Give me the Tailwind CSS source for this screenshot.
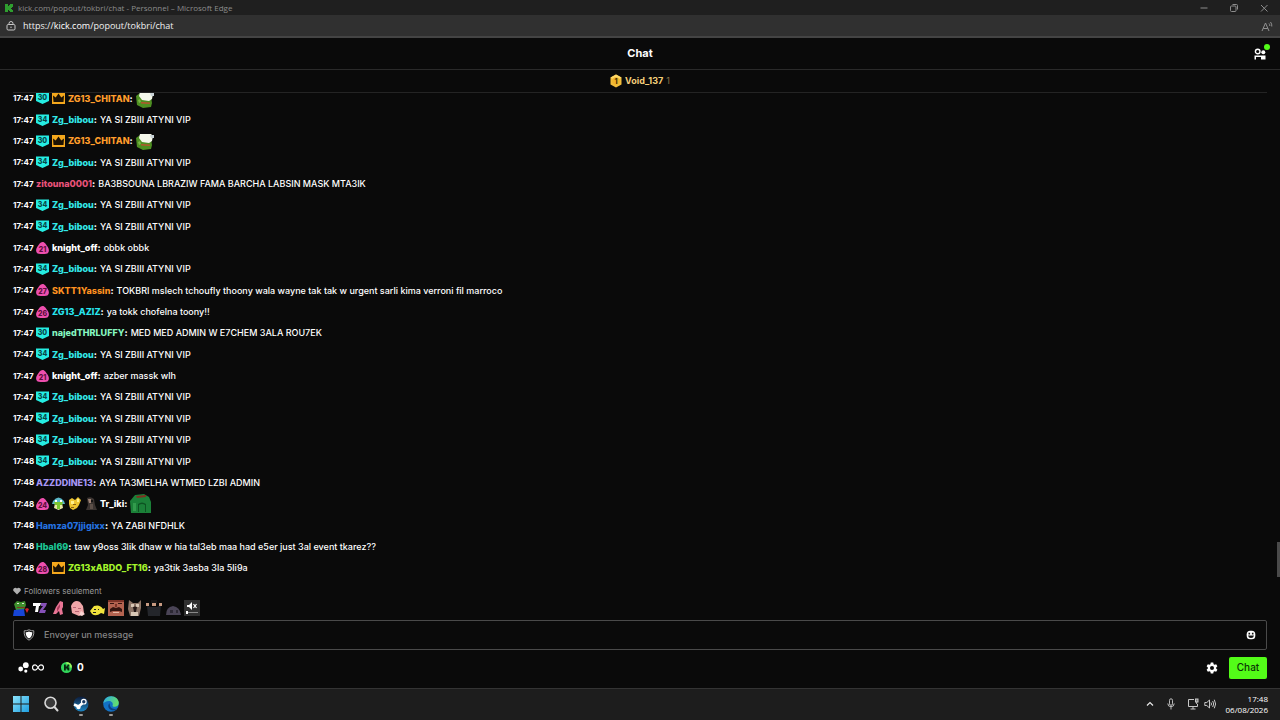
<!DOCTYPE html>
<html lang="fr">
<head>
  <meta charset="UTF-8">
  <meta name="viewport" content="width=device-width, initial-scale=1.0">
  <title>kick.com/popout/tokbri/chat</title>
  <script src="https://cdn.jsdelivr.net/npm/@tailwindcss/browser@4"></script>
</head>
<body class="h-screen flex flex-col overflow-hidden bg-[#0a0a0a] text-white font-['Inter',sans-serif]">

  <!-- window title bar -->
  <div class="h-[15px] shrink-0 flex items-center bg-[#1f1f1f] pl-1 pr-[11px] text-[8px] text-[#8c8c8c] font-['Open_Sans',sans-serif]">
    <svg class="size-[10px] mr-1" viewBox="0 0 10 10"><path fill="#2f9e2f" d="M1 1h3v2h1V2h1V1h3v3H8v1H7v1h1v1h1v2H6V8H5V7H4v2H1z"/></svg>
    <span>kick.com/popout/tokbri/chat - Personnel – Microsoft Edge</span>
    <div class="ml-auto flex items-center gap-5 text-[#8c8c8c]">
      <button aria-label="Réduire"><svg class="size-[10px]" viewBox="0 0 10 10" stroke="currentColor" fill="none"><path d="M1.500 5h7"/></svg></button>
      <button aria-label="Restaurer"><svg class="size-[10px]" viewBox="0 0 10 10" stroke="currentColor" fill="none"><rect x="1.500" y="3" width="5.500" height="5.500" rx="1"/><path d="M3.500 1.500h4a1 1 0 0 1 1 1v4"/></svg></button>
      <button aria-label="Fermer"><svg class="size-[10px]" viewBox="0 0 10 10" stroke="currentColor" fill="none"><path d="M2 2l6.500 6.500M8.500 2L2 8.500"/></svg></button>
    </div>
  </div>

  <!-- address bar -->
  <div class="h-[23px] shrink-0 flex items-center bg-[#303030] border-b-2 border-[#444444] pt-px pl-[6px] pr-[7px] text-[9px] text-[#f0f0f0] font-['Open_Sans',sans-serif]">
    <svg class="size-[10px] mr-[7px]" viewBox="0 0 10 10" fill="none" stroke="#c8c8c8"><rect x="1" y="3.500" width="8" height="5.500" rx="1.200"/><path d="M3 3.500V2.500a2 2 0 0 1 4 0v1"/><circle cx="5" cy="6.200" r=".7" fill="#c8c8c8" stroke="none"/></svg>
    <span>https://<span class="text-white">kick.com</span>/popout/tokbri/chat</span>
    <svg class="ml-auto w-3 h-[11px]" viewBox="0 0 12 11" fill="none" stroke="#909090"><path d="M1 10L4.500 2 8 10M2.300 7.500h4.500M8 2.500q1 1 .8 2.500M9.500 1q1.600 2 1.300 4.500"/></svg>
  </div>

  <header class="h-8 shrink-0 flex items-center border-b border-[#2a2a2a] px-3">
    <h1 class="flex-1 text-center pl-5 text-[11px] font-bold">Chat</h1>
    <button class="relative w-5 h-4" aria-label="Spectateurs">
      <svg class="w-3 h-3 ml-[6px]" viewBox="0 0 12 12"><circle cx="3.700" cy="3.500" r="2.300" fill="none" stroke="#fff" stroke-width="1.400"/><circle cx="9.300" cy="4.200" r="2" fill="#fff"/><path fill="#fff" d="M.5 7.500h11v4h-4.500V9H2v2.500H.5z"/></svg>
      <span class="absolute -top-[2px] -right-[2px] size-[6px] rounded-full bg-[#53fc18]"></span>
    </button>
  </header>

  <div class="h-[23px] shrink-0 mx-[13px] flex items-center justify-center border-b border-[#242424] text-[9px] font-bold text-[#f5cf7b]">
    <svg class="w-3 h-[14px] mr-[3px]" viewBox="0 0 12 14"><path fill="#f3bd3a" d="M6 .5l5.500 3v7L6 13.500.5 10.500v-7z"/><path fill="#ffd966" d="M6 .5l5.500 3L6 7 .5 3.500z"/><circle cx="6" cy="7" r="3.800" fill="#f0b52d"/><text x="6" y="9.500" text-anchor="middle" font-size="7" font-weight="800" fill="#4b3200">1</text></svg>
    <span>Void_137</span>
    <span class="ml-[3px] font-normal text-[#8a744a]">1</span>
  </div>

  <!-- messages, scrolled to the bottom -->
  <main class="flex-1 min-h-0 relative flex flex-col justify-end overflow-hidden">
    <ul id="messages" class="h-[calc(100%+6px)] shrink-0 flex flex-col px-[13px] text-[9px] leading-none"></ul>
    <!-- scrollbar thumb -->
    <div class="absolute right-0 bottom-px w-[3px] h-[35px] bg-[#4a4a4a]"></div>
  </main>

  <footer class="shrink-0 px-[13px] pt-[7px] pb-[9px]">
    <p class="h-[11px] flex items-center gap-[3px] text-[8px] text-[#9a9a9a]">
      <svg class="size-2" viewBox="0 0 8 8"><path fill="#b0b0b0" d="M4 7.500L.8 4.300A2 2 0 0 1 4 1.600a2 2 0 0 1 3.200 2.700z"/></svg>
      Followers seulement
    </p>
    <div id="quick-emotes" class="mt-1 h-4 flex gap-[3px]"></div>

    <div class="mt-1 h-[30px] flex items-center rounded-[2px] border border-[#4a4a4a] px-[9px]">
      <svg class="size-3" viewBox="0 0 12 12"><path fill="none" stroke="#a0a0a0" d="M6 .8q2.500 1.200 4.800 1 .6 6.500-4.800 9.400Q.6 8.300 1.200 1.800 3.500 2 6 .8z"/><path fill="#fff" d="M6 2.500q1.600.8 3.300.7Q9.500 7.500 6 9.500 2.500 7.500 2.700 3.200 4.400 3.300 6 2.500z"/></svg>
      <input type="text" aria-label="Envoyer un message" placeholder="Envoyer un message" class="flex-1 ml-[9px] bg-transparent text-[9px] font-medium outline-none placeholder:text-[#858585]">
      <button aria-label="Emotes"><svg class="size-[10px] mr-[1px] block" viewBox="0 0 10 10"><rect x=".7" y=".7" width="8.600" height="8.600" rx="3.500" fill="#fff"/><path fill="#111" d="M2.500 2.800h1.600v1.600H2.500zM5.900 2.800h1.600v1.600H5.900zM2 5.500h6q-.5 2.500-3 2.500T2 5.500z"/></svg></button>
    </div>

    <div class="mt-[6px] h-[23px] flex items-center text-[10px] font-bold">
      <button class="flex items-center gap-[3px] ml-[5px]" aria-label="Identité">
        <svg class="size-[11px]" viewBox="0 0 11 11" fill="#fff"><circle cx="7.800" cy="3.200" r="2.900"/><circle cx="2.700" cy="7" r="2.400"/><circle cx="7.800" cy="9.100" r="1.600"/></svg>
        <svg class="w-3 h-[7px]" viewBox="0 0 12 7" fill="none" stroke="#fff" stroke-width="1.200"><path d="M6 3.500C5 1.800 4.300.8 3.100.8a2.600 2.700 0 0 0 0 5.400C4.300 6.200 5 5.200 6 3.500S7.700.8 8.900.8a2.600 2.700 0 0 1 0 5.400C7.700 6.200 7 5.200 6 3.500z"/></svg>
      </button>
      <button class="flex items-center gap-[5px] ml-[17px]">
        <svg class="size-[11px]" viewBox="0 0 11 11"><circle cx="5.500" cy="5.500" r="5.500" fill="#31d65a"/><path d="M5.500 0a5.500 5.500 0 0 1 5.500 5.500H9A3.500 3.500 0 0 0 5.500 2z" fill="#9cf25c"/><path fill="#06240d" d="M3 2.500h1.800v2h.9v-1h.9v-1h1.700v2h-.9v1h.9v3H6.600v-1h-.9v-1h-.9v2H3z"/></svg>
        0
      </button>
      <button class="ml-auto mr-[11px]" aria-label="Paramètres"><svg class="size-3 block" viewBox="0 0 24 24" fill="#fff"><path fill-rule="evenodd" d="M9.500 1h5l.7 3.300 1.900 1.100 3.200-1 2.500 4.200-2.500 2.300v2.200l2.500 2.300-2.500 4.200-3.200-1-1.900 1.100-.7 3.300h-5l-.7-3.300-1.900-1.100-3.200 1-2.500-4.200 2.500-2.300v-2.200L1.200 8.600l2.500-4.200 3.200 1 1.900-1.100zM12 8a4 4 0 1 0 0 8 4 4 0 0 0 0-8z"/></svg></button>
      <button class="h-[22px] w-[38px] rounded-[2px] bg-[#53fc18] text-[10px] font-medium text-[#0b3306]">Chat</button>
    </div>
  </footer>

  <!-- taskbar -->
  <nav class="h-8 shrink-0 flex items-center bg-[#1d1d1d] border-t border-[#343434] pl-[13px] pr-3 pb-[2px] font-['Open_Sans',sans-serif]">
    <div class="flex items-center gap-[14px]">
      <button aria-label="Démarrer"><svg class="size-4 block" viewBox="0 0 16 16"><defs><linearGradient id="win" x2="1" y2="1"><stop stop-color="#8be3fb"/><stop offset="1" stop-color="#1f9fe0"/></linearGradient></defs><path fill="url(#win)" d="M0 0h7.500v7.500H0zM8.500 0H16v7.500H8.500zM0 8.500h7.500V16H0zM8.500 8.500H16V16H8.500z"/></svg></button>
      <button aria-label="Rechercher"><svg class="size-4 block" viewBox="0 0 16 16" fill="#3a3a3a" stroke="#d8d8d8" stroke-width="1.600"><circle cx="7.500" cy="6.800" r="5.500"/><path stroke-width="2" stroke-linecap="round" d="M11.500 11l3 3.500"/></svg></button>
      <button class="relative" aria-label="Steam">
        <svg class="size-4 block" viewBox="0 0 16 16"><defs><linearGradient id="steam" x2="0" y2="1"><stop stop-color="#0d1b3a"/><stop offset="1" stop-color="#1c86c4"/></linearGradient></defs><circle cx="8" cy="8" r="7.500" fill="url(#steam)"/><path d="M1 8.500l4.500 2 3-2.500 2-2.500" stroke="#fff" stroke-width="2.600" fill="none"/><circle cx="5.500" cy="11" r="2.200" fill="#fff"/><circle cx="10.800" cy="5.700" r="2.300" fill="#1a3a63" stroke="#fff" stroke-width="1.200"/></svg>
        <span class="absolute left-[6px] -bottom-[4px] w-1 h-[2px] rounded bg-[#9a9a9a]"></span>
      </button>
      <button class="relative" aria-label="Microsoft Edge">
        <svg class="size-4 block" viewBox="0 0 16 16"><defs><linearGradient id="edge" x2="1" y2=".3"><stop stop-color="#2aa8e8"/><stop offset="1" stop-color="#62dd70"/></linearGradient></defs><circle cx="8" cy="8" r="7.800" fill="#1271c4"/><path fill="url(#edge)" d="M.3 7.500C.8 3 4.200.2 8.200.2c4.500 0 7.600 3.200 7.600 6.600 0 2.500-1.900 4-4.200 4-1.600 0-2.300-.7-2-1.300C10.500 7.500 9 5 6 5 3 5 .8 6.500.3 7.500z"/><path fill="#0c3f80" d="M6.500 7.200c-1.800 1.500-1.600 5 1.100 6.500 2.500 1.300 5 .6 6.700-1.200-2.500 1-6.500.2-7.300-2.500-.3-1-.2-2-.5-2.800z"/></svg>
        <span class="absolute left-[6px] -bottom-[4px] w-1 h-[2px] rounded bg-[#9a9a9a]"></span>
      </button>
    </div>
    <div class="ml-auto flex items-center text-white">
      <svg class="w-2 h-[6px] mr-[13px]" viewBox="0 0 8 6" fill="none" stroke="#e8e8e8" stroke-width="1.200"><path d="M1 4.500l3-3 3 3"/></svg>
      <svg class="w-2 h-3 mr-3" viewBox="0 0 8 12" fill="none" stroke="#bdbdbd"><rect x="2.500" y=".8" width="3" height="6.500" rx="1.500"/><path d="M.8 5.500a3.200 3.200 0 0 0 6.400 0M4 9v2.500"/></svg>
      <svg class="w-3 h-3 mr-[5px]" viewBox="0 0 12 12" fill="none" stroke="#c8c8c8"><path d="M7 1.500H1.500v7h9V6M3.500 11h5M6 8.500V11"/><rect x="8.500" y="1" width="2.500" height="3" fill="#777"/><path d="M9.700 4v2"/></svg>
      <svg class="w-3 h-3 mr-[10px]" viewBox="0 0 12 12" fill="none" stroke="#c8c8c8"><path d="M.8 4.500h2L5.500 2v8L2.800 7.500h-2zM7 4.500q1 1.500 0 3M8.700 3q2 3 0 6M10.300 1.700q2.600 4.300 0 8.600"/></svg>
      <p class="text-right text-[8px] leading-[11px]">17:48<br>06/08/2026</p>
    </div>
  </nav>

  <script>
    const crown = '<svg class="w-[13px] h-3" viewBox="0 0 13 12"><rect width="13" height="12" fill="#f5a81c"/><path fill="#1c1204" d="M1 3.500l2.700 2L6.500 1.500l2.800 4 2.700-2L11.500 10h-10z"/></svg>';

    // level badges: shield from level 30, rounded triangle below
    function level(n) {
      const high = n >= 30;
      const shape = high
        ? '<path fill="#25ede2" d="M0 .5h13v8.500l-6.500 3L0 9z"/>'
        : '<path fill="#ee4fae" d="M6.500 0C9 0 10 2.500 11.500 4.500 13 7 13.500 9 12 11q-1 1-5.500 1T1 11C-.5 9 0 7 1.500 4.500 3 2.500 4 0 6.500 0z"/>';
      return `<svg class="w-[13px] h-3" viewBox="0 0 13 12">${shape}<text x="6.500" y="${high ? 8 : 9.500}" text-anchor="middle" font-size="7" font-weight="800" fill="${high ? '#084448' : '#5c0d3c'}">${n}</text></svg>`;
    }

    const alien = '<svg class="size-[13px]" viewBox="0 0 13 13"><path fill="#5bb8c9" d="M1 4Q6.500-3 12 4l1 3H0z"/><path fill="#e9e9a5" d="M3 6h7l1 5-4.500 2L2 11z"/><path fill="#7cc62e" d="M2 5h9l-1 3H3zM5 8h3v4H5z"/><path fill="#fff" d="M3 3h2v2H3zM8 3h2v2H8z"/></svg>';
    const yellow = '<svg class="size-[13px]" viewBox="0 0 13 13"><path fill="#eec530" d="M1 3l3-2 3 2 3-3 3 3-2 5-2 3-4 2-3-2-1-4z"/><path fill="#fff08a" d="M3 4h3v3H3zM9 2h2v3H9z"/><path fill="#8a6312" d="M5 7h3v1H5zM3 10h3v1H3z"/></svg>';
    const dark = '<svg class="size-[13px]" viewBox="0 0 13 13"><path fill="#3b3431" d="M3 1q4-2 7 1l1 6 2 5H2l2-5z"/><path fill="#a08476" d="M4 2h3v4H5z"/><path fill="#5d5049" d="M6 7h3v5H6z"/><path fill="#141212" d="M7 3h2v2H7z"/></svg>';
    const frogCap = '<svg class="w-[18px] h-4 mt-[3px]" viewBox="0 0 18 16"><path fill="#4e8f22" d="M0 4l4-3 11 4 1 6-1 4-8 1-6-3z"/><path fill="#f4f7ea" d="M4 0h11l2 2-1 5-3 2-7-1-3-4z"/><path fill="#b5562e" d="M5 10l9 .5V12l-9-.5z"/><path fill="#79b844" d="M2 8l2-1 1 3-2 1z"/><path fill="#c9d2d6" d="M14 1h4v3h-3z"/></svg>';
    const greenBag = '<svg class="w-[21px] h-[19px]" viewBox="0 0 21 19"><path fill="#1b8038" d="M0 7l5-6 9-1 5 3 2 5v11H1z"/><path fill="#0d5322" d="M8 18V10q4-3 8 0v8h-1v-7q-3-2-6 0v7z"/><path fill="#7d3020" d="M6 2l10-1v2l-9 1z"/><path fill="#329b4c" d="M3 9h3v8H3z"/></svg>';

    const bibou = (time) => [time, [level(34)], 'Zg_bibou', 'text-[#33e8e8]', 'YA SI ZBIII ATYNI VIP'];
    const chitan = ['17:47', [level(30), crown], 'ZG13_CHITAN', 'text-[#ff9d2b]', frogCap];

    const messages = [
      chitan,
      bibou('17:47'),
      chitan,
      bibou('17:47'),
      ['17:47', [], 'zitouna0001', 'text-[#e9537a]', 'BA3BSOUNA LBRAZIW FAMA BARCHA LABSIN MASK MTA3IK'],
      bibou('17:47'),
      bibou('17:47'),
      ['17:47', [level(21)], 'knight_off', 'text-white', 'obbk obbk'],
      bibou('17:47'),
      ['17:47', [level(27)], 'SKTT1Yassin', 'text-[#ff9220]', 'TOKBRI mslech tchoufly thoony wala wayne tak tak w urgent sarli kima verroni fil marroco'],
      ['17:47', [level(26)], 'ZG13_AZIZ', 'text-[#27e5ef]', 'ya tokk chofelna toony!!'],
      ['17:47', [level(30)], 'najedTHRLUFFY', 'text-[#86f5c0]', 'MED MED ADMIN W E7CHEM 3ALA ROU7EK'],
      bibou('17:47'),
      ['17:47', [level(21)], 'knight_off', 'text-white', 'azber massk wlh'],
      bibou('17:47'),
      bibou('17:47'),
      bibou('17:48'),
      bibou('17:48'),
      ['17:48', [], 'AZZDDINE13', 'text-[#a797f5]', 'AYA TA3MELHA WTMED LZBI ADMIN'],
      ['17:48', [level(24), alien, yellow, dark], 'Tr_iki', 'text-white', greenBag],
      ['17:48', [], 'Hamza07jjigixx', 'text-[#2472e0]', 'YA ZABI NFDHLK'],
      ['17:48', [], 'Hbal69', 'text-[#1cc795]', 'taw y9oss 3lik dhaw w hia tal3eb maa had e5er just 3al event tkarez??'],
      ['17:48', [level(28), crown], 'ZG13xABDO_FT16', 'text-[#a5f52c]', 'ya3tik 3asba 3la 5li9a'],
    ];

    document.getElementById('messages').innerHTML = messages.map(([time, badges, name, color, body]) => `
      <li class="flex-1 min-h-0 pt-px flex items-center whitespace-nowrap">
        <span class="w-[23px] text-[8px] font-bold">${time}</span>
        <span class="flex items-center gap-[3px] ${badges.length ? 'mr-[3px]' : ''}">${badges.join('')}</span>
        <span class="font-extrabold ${color}">${name}</span><span class="font-extrabold mr-[3px]">:</span>
        <span class="font-medium">${body}</span>
      </li>`).join('');

    // recently used emotes
    const quickEmotes = [
      ['Pepe', '<path fill="#3f8f2d" d="M1 4l3-3 4 1 4-1 1 4-2 5H3z"/><path fill="#1745d6" d="M1 10l10-1 1 7H0z"/><path fill="#d9e8d0" d="M4 3h2v1H4zM9 3h2v1H9z"/><path fill="#7b3a22" d="M4 7h8v1H4z"/><path fill="#d3222c" d="M12 9l2-1 2 1-2 4z"/>'],
      ['TZ', '<path fill="#fff" d="M1 3h8l-1 3H7l-1 6H3l1-6H1z"/><path fill="#8651b8" d="M9 3h6l-1 3-3 4h3l-1 3H7l1-3 3-4H9z"/>'],
      ['Rose', '<path fill="#e87595" d="M2 14l3-7 4-6 3 1v5l-1 2 1 5-3 1-1-4-3 3z"/><path fill="#a93c5b" d="M6 8l3-4v3l-3 5z"/>'],
      ['Sad', '<path fill="#efa6a8" d="M1 6q3-7 9-4l3 4 1 7-5 3-7-3z"/><path fill="#b86472" d="M3 7h3v1H3zM8 8h3v1H8zM5 11h4v1H5z"/><path fill="#fbd5d3" d="M11 11l4 3-3 2-3-1z"/>'],
      ['Poisson', '<path fill="#f0e23c" d="M1 11l4-5q6-2 9 3l2-1-1 6-3-1q-5 4-9 1z"/><path fill="#222" d="M5 9h2v1H5zM9 9h1v1H9zM4 12h3v1H4z"/>'],
      ['Moustache', '<path fill="#b46350" d="M0 0h16v16H0z"/><path fill="#35140f" d="M2 9l3-2 3 1 3-1 3 2v3l-3-1H5l-3 1zM2 3h4v1H2zM10 3h4v1h-4z"/><path fill="#e6b9a6" d="M5 12h6v1H5z"/><path fill="#7e3328" d="M0 0h16v2H0zM7 4h2v3H7z"/>'],
      ['Chat', '<path fill="#8c7466" d="M2 0l4 3h5l3-3v8l-2 8H3L1 9z"/><path fill="#d8c7b5" d="M4 4h3v3H4zM9 4h3v3H9zM4 12h7v4H4z"/><path fill="#251816" d="M6 7q2-1 4 0l-1 5H7z"/>'],
      ['Costume', '<path fill="#24262b" d="M1 6l4 1h6l4-2-1 11H2z"/><path fill="#c89b82" d="M6 2h4v4H6zM0 3h3v3H0zM13 3h3v3h-3z"/><path fill="#181818" d="M5 0h6v3H5z"/>'],
      ['Ombre', '<path fill="#4a4456" d="M1 15q0-8 7-9 7 1 8 9z"/><path fill="#2c2834" d="M5 10h3v3H5zM11 10h2v3h-2z"/>'],
      ['Muet', '<path fill="#303030" d="M0 0h16v16H0z"/><path fill="#fff" d="M3 5h2l3-3v8L5 7H3z"/><path stroke="#fff" stroke-width="1.200" d="M9.500 4l3 4M12.500 4l-3 4"/><path fill="#888" d="M4 12h10v1H4z"/><path fill="#fff" d="M2 11h2v3H2z"/>'],
    ];
    document.getElementById('quick-emotes').innerHTML = quickEmotes.map(([label, art]) =>
      `<button aria-label="${label}"><svg class="size-4 block" viewBox="0 0 16 16">${art}</svg></button>`).join('');
  </script>
</body>
</html>
